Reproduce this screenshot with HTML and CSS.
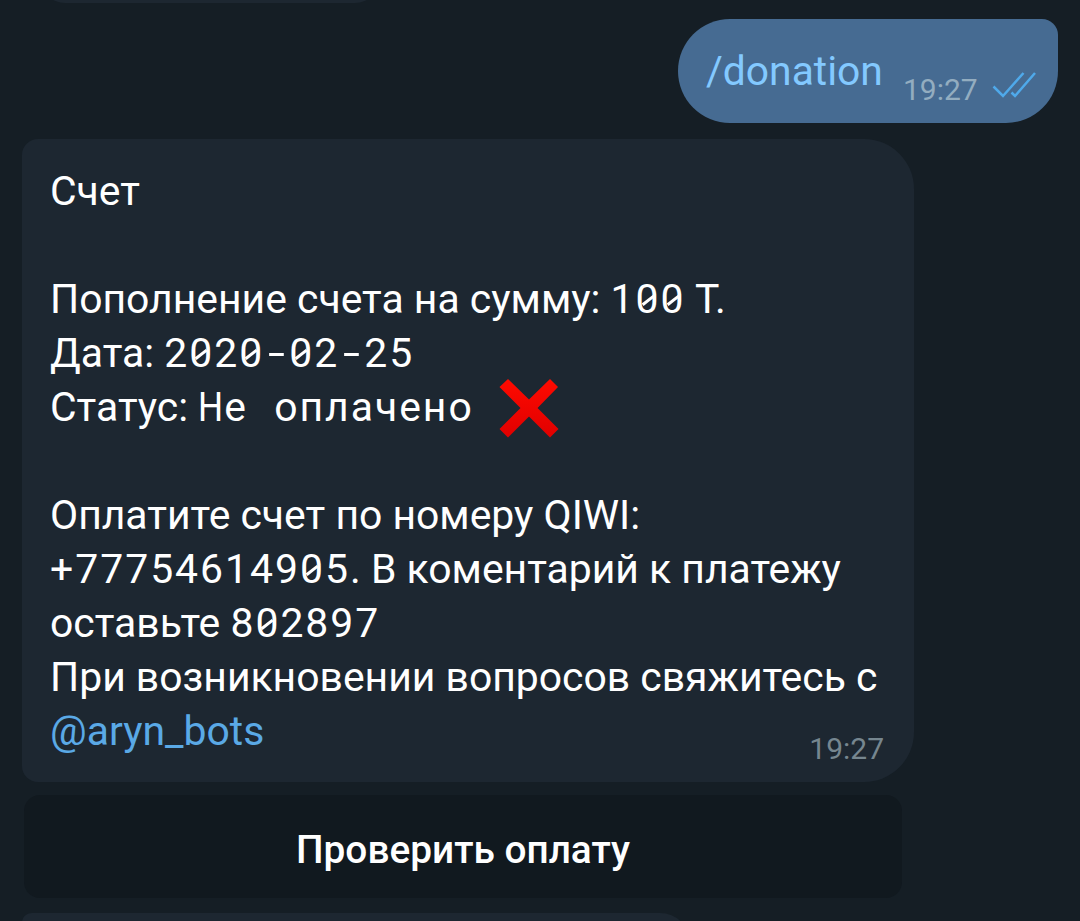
FILE: index.html
```
<!DOCTYPE html>
<html lang="ru">
<head>
    <meta charset="UTF-8">
    <meta name="viewport" content="width=device-width, initial-scale=1.0">
    <title>Чат</title>
    <link rel="stylesheet" href="styles.css">
</head>
<body>
    <div class="chat">
        <!-- Конец предыдущего сообщения -->
        <div class="bubble-prev"></div>

        <!-- Команда пользователя -->
        <div class="message-out">
            <span class="command">/donation</span>
            <span class="time time-out">19:27</span>
            <svg class="checks" width="44" height="28" viewBox="0 0 44 28" fill="none" stroke="#4fa9ea" stroke-width="2.5">
                <path d="M1.5 14.5 L11 24 L31.5 1"/>
                <path d="M19.5 20.5 L23 24 L43 1"/>
            </svg>
        </div>

        <!-- Ответ бота -->
        <div class="message-in">
            <p>Счет</p>
            <p>&nbsp;</p>
            <p>Пополнение счета на сумму: <span class="code">1<span class="zero">0</span><span class="zero">0</span></span> Т.</p>
            <p>Дата: <span class="code">2<span class="zero">0</span>2<span class="zero">0</span><span class="dash">-</span><span class="zero">0</span>2<span class="dash">-</span>25</span></p>
            <p class="status">Статус: <span class="code words"><span class="wide">Н</span>е оплачено</span><svg class="cross" width="60" height="60" viewBox="0 0 60 60">
                <defs>
                    <linearGradient id="red" x1="0" y1="0" x2="0" y2="1">
                        <stop offset="0" stop-color="#ff0a00"/>
                        <stop offset="1" stop-color="#e00000"/>
                    </linearGradient>
                </defs>
                <path fill="url(#red)" d="M9 1 L30 21.5 L51 1 L59 9 L38.5 30 L59.5 51 L51 59.5 L30 38.5 L9 59.5 L0.5 51 L21.5 30 L0.5 9 Z"/>
            </svg></p>
            <p>&nbsp;</p>
            <p>Оплатите счет по номеру QIWI:</p>
            <p><span class="code">+777546149<span class="zero">0</span>5</span>. В коментарий к платежу</p>
            <p>оставьте <span class="code">8<span class="zero">0</span>2897</span></p>
            <p>При возникновении вопросов свяжитесь с</p>
            <p class="last"><span class="mention">@aryn_bots</span><span class="time time-in">19:27</span></p>
        </div>

        <div class="button">Проверить оплату</div>

        <!-- Начало следующего сообщения -->
        <div class="bubble-next"></div>
    </div>
</body>
</html>
```
FILE: styles.css
```
body {
    margin: 0;
    background-color: #151e25;
    font-family: Roboto, sans-serif;
    font-size: 40.8px;
    color: #fff;
}

.chat {
    display: flex;
    flex-direction: column;
    align-items: flex-start;
    height: 921px;
    overflow: hidden;
}

.bubble-prev {
    flex: none;
    width: 340px;
    height: 50px;
    margin: -47px 0 16px 40px;
    border-radius: 16px 50px 50px 50px;
    background-color: #1d2731;
}

/* Исходящее сообщение */
.message-out {
    flex: none;
    display: flex;
    align-items: flex-start;
    align-self: flex-end;
    box-sizing: border-box;
    width: 380px;
    height: 104px;
    margin-right: 22px;
    padding-left: 28px;
    border-radius: 52px 16px 52px 52px;
    background-color: #466b92;
}

.command {
    width: 197px;
    line-height: 54px;
    margin-top: 25px;
    color: #83c9ff;
}

.time {
    font-size: 30px;
    line-height: 36px;
}

.time-out {
    width: 88px;
    margin-top: 53px;
    color: #93adc0;
}

.checks {
    margin: 53px 0 0 1px;
}

/* Входящее сообщение */
.message-in {
    flex: none;
    box-sizing: border-box;
    width: 892px;
    height: 643px;
    margin: 16px 0 0 22px;
    padding: 25px 30px 24px 28px;
    border-radius: 16px 50px 50px 16px;
    background-color: #1d2731;
    font-size: 40.9px;
}

.message-in p {
    height: 54px;
    margin: 0;
    line-height: 54px;
    white-space: nowrap;
}

/* Моноширинные фрагменты */
.code {
    letter-spacing: 2px;
}

.words {
    word-spacing: 14px;
}

/* Широкая буква, сжатая до ширины знака */
.wide {
    display: inline-block;
    width: 26px;
    letter-spacing: 0;
    transform: scaleX(0.86);
    transform-origin: 0 0;
}

.dash {
    display: inline-block;
    width: 25px;
    text-align: center;
    letter-spacing: 0;
    transform: scaleX(1.5);
}

/* Косая черта внутри нуля */
.zero {
    position: relative;
}

.zero::after {
    content: "";
    position: absolute;
    left: 5px;
    top: 24px;
    width: 14px;
    height: 2.6px;
    background-color: #fff;
    transform: rotate(-38deg);
}

.message-in .status {
    display: flex;
    align-items: center;
    white-space: pre;
}

.cross {
    flex: none;
    margin: 2px 0 0 25px;
}

.message-in .last {
    display: flex;
    justify-content: space-between;
}

.mention {
    color: #5aa9e6;
}

.time-in {
    margin-top: 27px;
    color: #76868f;
}

.button {
    flex: none;
    width: 878px;
    height: 103px;
    margin: 13px 0 15px 24px;
    border-radius: 16px;
    background-color: #11191f;
    font-size: 38.8px;
    font-weight: 500;
    line-height: 110px;
    text-align: center;
}

.bubble-next {
    flex: none;
    width: 668px;
    height: 60px;
    margin-left: 22px;
    border-radius: 16px 50px 50px 16px;
    background-color: #1d2731;
}
```
